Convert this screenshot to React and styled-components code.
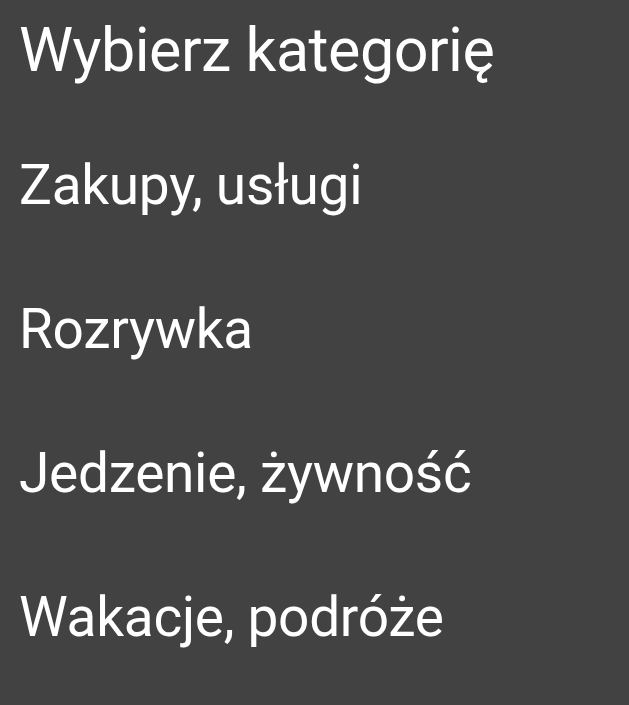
import styled, {createGlobalStyle} from "styled-components";

const GlobalStyle = createGlobalStyle`
  html, body {
    margin: 0;
    padding: 0;
    background: #424242;
  }
  body {
    font-family: Roboto, "Noto Sans", sans-serif;
    color: #ffffff;
  }
`;

const categories = [
  "Zakupy, usługi",
  "Rozrywka",
  "Jedzenie, żywność",
  "Wakacje, podróże",
];

export default function App() {
  return (
    <>
      <GlobalStyle />
      <Screen>
        <Title>Wybierz kategorię</Title>
        <List>
          {categories.map(name => (
            <Item key={name}>{name}</Item>
          ))}
        </List>
      </Screen>
    </>
  );
}

const Screen = styled.div`
  width: 629px;
  height: 705px;
  background: #424242;
  overflow: hidden;
`;

const Title = styled.h1`
  margin: 0;
  height: 113px;
  padding: 14px 19px 0;
  box-sizing: border-box;
  font-size: 61px;
  font-weight: 400;
  letter-spacing: -0.5px;
  line-height: normal;
`;

const List = styled.ul`
  list-style: none;
  margin: 0;
  padding: 0;
`;

const Item = styled.li`
  display: flex;
  align-items: center;
  height: 144px;
  padding: 0 19px;
  font-size: 55px;
  letter-spacing: -0.3px;
  line-height: normal;
`;
